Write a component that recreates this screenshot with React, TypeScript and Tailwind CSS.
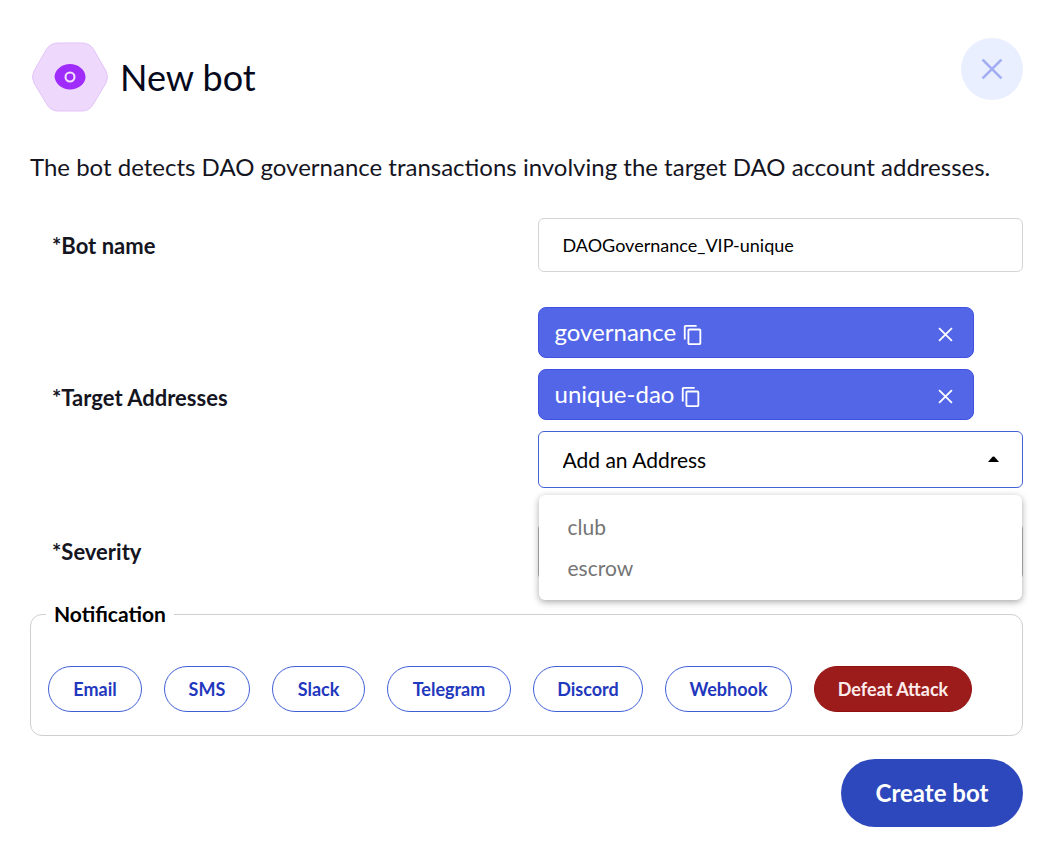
import React, { useState } from "react";
import { MdContentCopy } from "react-icons/md";

const channels = [
  { name: "Email", className: "w-[94px]" },
  { name: "SMS", className: "w-[86px]" },
  { name: "Slack", className: "w-[93px]" },
  { name: "Telegram", className: "w-[124px]" },
  { name: "Discord", className: "w-[110px]" },
  { name: "Webhook", className: "w-[127px]" },
];

const allAddresses = ["governance", "unique-dao", "club", "escrow"];

const CloseIcon = ({ className }: { className: string }) => (
  <svg viewBox="0 0 14 14" fill="none" stroke="currentColor" className={className} aria-hidden="true">
    <path d="M1 1L13 13M13 1L1 13" strokeWidth="1.7" />
  </svg>
);

const BotIcon = () => (
  <svg width="76" height="70" viewBox="0 0 76 70" className="shrink-0" aria-hidden="true">
    <path
      d="M26 1H50Q58 1 62 8L74 29Q77 35 74 41L62 61Q58 69 50 69H26Q18 69 14 61L2 41Q-1 35 2 29L14 8Q18 1 26 1Z"
      fill="#eed9fd"
      stroke="#e3c3fa"
    />
    <path
      d="M22.5 34.5C23 27.5 30 22 38 22S53 27.5 53.5 34.5S46 47.5 38 47.5S23 41.5 22.5 34.5Z"
      fill="#9f2cfa"
    />
    <circle cx="38" cy="35" r="4.5" fill="none" stroke="#f3e2ff" strokeWidth="2.1" />
  </svg>
);

const AddressTag = ({ name, onRemove }: { name: string; onRemove: () => void }) => (
  <div className="mr-[49px] flex h-[51px] items-center rounded-lg border border-[#3f51e0] bg-[#5266e7] pl-4 pr-5 text-white">
    <span className="pb-0.5 text-[24px] leading-7">{name}</span>
    <button type="button" aria-label={`Copy ${name}`} className="ml-1.5 mt-1">
      <MdContentCopy className="size-[22px]" />
    </button>
    <button type="button" aria-label={`Remove ${name}`} onClick={onRemove} className="ml-auto mt-1">
      <CloseIcon className="size-[15px]" />
    </button>
  </div>
);

export default function App() {
  const [name, setName] = useState("DAOGovernance_VIP-unique");
  const [targets, setTargets] = useState(["governance", "unique-dao"]);
  const [open, setOpen] = useState(true);

  const remaining = allAddresses.filter((a) => !targets.includes(a));

  return (
    <form
      onSubmit={(e) => e.preventDefault()}
      className="bg-white pb-5 pl-[30px] pr-[27px] pt-[38px] font-['Lato',sans-serif] text-[#15151f]"
    >
      <header className="flex items-start justify-between">
        <div className="flex items-center gap-3 pl-0.5 pt-1">
          <BotIcon />
          <h1 className="text-[36px] leading-12 text-[#06081c]">New bot</h1>
        </div>
        <button
          type="button"
          aria-label="Close"
          className="flex size-[62px] items-center justify-center rounded-full bg-[#e9effe] text-[#a3adf3]"
        >
          <CloseIcon className="size-[22px]" />
        </button>
      </header>

      <p className="mt-[39px] text-[24px] leading-8">
        The bot detects DAO governance transactions involving the target DAO account addresses.
      </p>

      <div className="mt-[35px] grid grid-cols-2 items-center pl-[22px]">
        <label htmlFor="bot-name" className="text-[22px] font-bold">
          *Bot name
        </label>
        <input
          id="bot-name"
          value={name}
          onChange={(e) => setName(e.target.value)}
          className="h-[54px] w-full rounded-md border border-[#d4d4d6] px-6 text-[18px] text-black outline-none"
        />

        <label htmlFor="address" className="text-[22px] font-bold">
          *Target Addresses
        </label>
        <div className="my-[35px] flex flex-col gap-[11px]">
          {targets.map((t) => (
            <AddressTag key={t} name={t} onRemove={() => setTargets(targets.filter((x) => x !== t))} />
          ))}
          <div className="relative">
            <select
              id="address"
              onMouseDown={(e) => {
                e.preventDefault();
                setOpen(!open);
              }}
              className="h-[57px] w-full appearance-none rounded-md border border-[#4362d8] bg-white px-6 text-[21px] text-black outline-none"
            >
              <option>Add an Address</option>
            </select>
            <svg
              width="11"
              height="6"
              viewBox="0 0 11 6"
              className="pointer-events-none absolute right-6 top-[25px]"
              aria-hidden="true"
            >
              <path d="M0 6L4.5 0.8Q5.5 0 6.5 0.8L11 6Z" fill="#000" />
            </svg>
            {open && (
              <ul className="absolute left-px right-px top-16 z-10 rounded-md bg-white pb-3 pt-[11px] text-[21px] text-[#757575] shadow-[0_2px_7px_rgba(0,0,0,0.35)]">
                {remaining.map((a) => (
                  <li key={a}>
                    <button
                      type="button"
                      onClick={() => setTargets([...targets, a])}
                      className="block h-[41px] w-full px-[29px] text-left"
                    >
                      {a}
                    </button>
                  </li>
                ))}
              </ul>
            )}
          </div>
        </div>

        <label htmlFor="severity" className="text-[22px] font-bold">
          *Severity
        </label>
        <select
          id="severity"
          className="h-[57px] w-full appearance-none rounded-md border border-[#b5b5b8] bg-white px-6 text-[21px] outline-none"
        />
      </div>

      <fieldset className="mt-5 rounded-xl border border-[#cfcfd1] px-[17px] pb-[23px]">
        <legend className="-ml-0.5 px-2 text-[21px] font-bold leading-7 text-black">Notification</legend>
        <div className="flex flex-wrap gap-[22px] pt-[38px]">
          {channels.map((c) => (
            <button
              key={c.name}
              type="button"
              className={`h-[46px] rounded-full border border-[#3f5fd6] text-[18px] font-bold text-[#1f38bd] ${c.className}`}
            >
              {c.name}
            </button>
          ))}
          <button
            type="button"
            className="h-[46px] w-[158px] rounded-full border border-[#931010] bg-[#9b1c1a] text-[18px] font-bold text-[#fdecec]"
          >
            Defeat Attack
          </button>
        </div>
      </fieldset>

      <div className="mt-[23px] flex justify-end">
        <button
          type="submit"
          className="h-[68px] w-[182px] rounded-full bg-[#2d48bc] text-[24px] font-bold text-white"
        >
          Create bot
        </button>
      </div>
    </form>
  );
}
